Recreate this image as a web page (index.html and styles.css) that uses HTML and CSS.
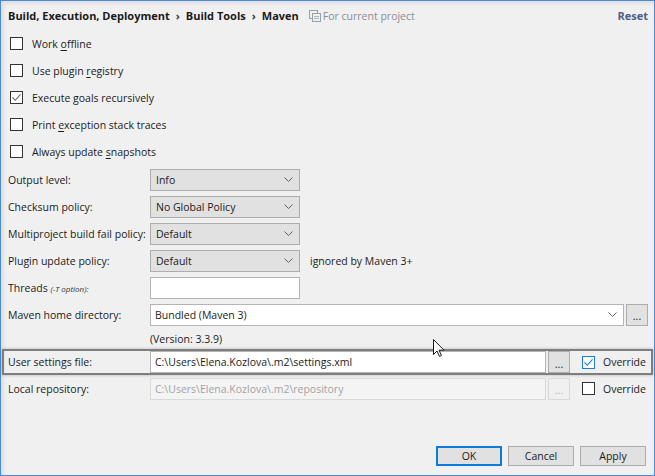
FILE: index.html
```html
<!DOCTYPE html>
<html>
<head>
<meta charset="utf-8">
<link rel="stylesheet" href="styles.css">
</head>
<body>
<div class="window">
  <header class="crumbs">
    <div class="path">
      <span class="b">Build, Execution, Deployment</span><span class="sep">›</span><span class="b">Build Tools</span><span class="sep">›</span><span class="b">Maven</span>
      <span class="scope"><svg class="scope-icon" width="12" height="12" viewBox="0 0 12 12"><rect x="0.5" y="0.5" width="8" height="8" fill="none" stroke="#9aa0a8"/><rect x="3.5" y="3.5" width="8" height="8" fill="#f0f0f0" stroke="#9aa0a8"/><path d="M5 6.5h5M5 8.5h5" stroke="#b0b5bb"/></svg>For current project</span>
    </div>
    <span class="reset">Reset</span>
  </header>

  <div class="checks">
    <div class="check"><span class="box"></span><span>Work <u>o</u>ffline</span></div>
    <div class="check"><span class="box"></span><span>Use plugin <u>r</u>egistry</span></div>
    <div class="check"><span class="box"><svg width="11" height="11" viewBox="0 0 11 11"><path d="M1.5 5.5l2.8 2.8 5.2-6" fill="none" stroke="#6a6a6a" stroke-width="1.1"/></svg></span><span>Execute <u>g</u>oals recursively</span></div>
    <div class="check"><span class="box"></span><span>Print <u>e</u>xception stack traces</span></div>
    <div class="check"><span class="box"></span><span>Always update <u>s</u>napshots</span></div>
  </div>

  <div class="form">
    <div class="row">
      <span class="label">Output level:</span>
      <div class="select"><span>Info</span><svg class="chev" width="9" height="5" viewBox="0 0 9 5"><path d="M0.5 0.5l4 4 4-4" fill="none" stroke="#606060"/></svg></div>
    </div>
    <div class="row">
      <span class="label">Checksum policy:</span>
      <div class="select"><span>No Global Policy</span><svg class="chev" width="9" height="5" viewBox="0 0 9 5"><path d="M0.5 0.5l4 4 4-4" fill="none" stroke="#606060"/></svg></div>
    </div>
    <div class="row">
      <span class="label">Multiproject build fail policy:</span>
      <div class="select"><span>Default</span><svg class="chev" width="9" height="5" viewBox="0 0 9 5"><path d="M0.5 0.5l4 4 4-4" fill="none" stroke="#606060"/></svg></div>
    </div>
    <div class="row">
      <span class="label">Plugin update policy:</span>
      <div class="select"><span>Default</span><svg class="chev" width="9" height="5" viewBox="0 0 9 5"><path d="M0.5 0.5l4 4 4-4" fill="none" stroke="#606060"/></svg></div>
      <span class="note">ignored by Maven 3+</span>
    </div>
    <div class="row">
      <span class="label">Threads <i class="hint">(-T option):</i></span>
      <div class="input threads"></div>
    </div>
    <div class="row">
      <span class="label">Maven home directory:</span>
      <div class="input combo"><span>Bundled (Maven 3)</span><svg class="chev" width="9" height="5" viewBox="0 0 9 5"><path d="M0.5 0.5l4 4 4-4" fill="none" stroke="#606060"/></svg></div>
      <div class="dots">...</div>
    </div>
    <div class="row version">
      <span class="label"></span>
      <span>(Version: 3.3.9)</span>
    </div>
    <div class="row path-row highlight">
      <span class="label">User settings file:</span>
      <div class="input path">C:\Users\Elena.Kozlova\.m2\settings.xml</div>
      <div class="dots">...</div>
      <div class="override"><span class="box blue"><svg width="11" height="11" viewBox="0 0 11 11"><path d="M1.5 5.5l2.8 2.8 5.2-6" fill="none" stroke="#1a7fd8" stroke-width="1.1"/></svg></span><span>Override</span></div>
    </div>
    <div class="row path-row local">
      <span class="label">Local repository:</span>
      <div class="input path disabled">C:\Users\Elena.Kozlova\.m2\repository</div>
      <div class="dots disabled">...</div>
      <div class="override"><span class="box"></span><span>Override</span></div>
    </div>
  </div>

  <footer class="buttons">
    <div class="btn default">OK</div>
    <div class="btn">Cancel</div>
    <div class="btn">Apply</div>
  </footer>

  <svg class="cursor" width="14" height="20" viewBox="0 0 14 20"><path d="M1.5 1.5v15l3.5-3.5 2.5 5.5 2-1-2.5-5.3h5z" fill="#fff" stroke="#1a1a1a" stroke-linejoin="round"/></svg>
</div>
</body>
</html>
```

FILE: styles.css
```css
html, body {
  margin: 0;
  padding: 0;
  background: #f0f0f0;
}

.window {
  position: relative;
  width: 655px;
  height: 476px;
  box-sizing: border-box;
  border: 1px solid #4a8ad8;
  background: #f0f0f0;
  box-shadow: inset 4px 4px 5px -2px rgba(0, 0, 0, 0.09);
  display: flex;
  flex-direction: column;
  font-family: "Open Sans", "Noto Sans", sans-serif;
  font-size: 10.5px;
  color: #1b1b1b;
  white-space: nowrap;
}

.crumbs {
  height: 29px;
  display: flex;
  align-items: center;
  justify-content: space-between;
  padding: 0 6px 0 7px;
}

.path {
  display: flex;
  align-items: center;
}

.b {
  font-size: 11px;
  font-weight: 700;
  color: #1b1b1b;
}

.sep {
  margin: 0 6px;
  font-size: 11px;
  font-weight: 700;
  color: #3a3a3a;
}

.scope {
  display: flex;
  align-items: center;
  margin-left: 10px;
  color: #8a8d93;
}

.scope-icon {
  margin-right: 2px;
}

.reset {
  font-size: 11px;
  font-weight: 700;
  color: #4f5d88;
}

.checks {
  display: flex;
  flex-direction: column;
}

.check {
  height: 27px;
  display: flex;
  align-items: center;
  padding-left: 9px;
}

.box {
  width: 13px;
  height: 13px;
  box-sizing: border-box;
  border: 1px solid #333;
  background: #fff;
  display: flex;
  align-items: center;
  justify-content: center;
  margin-right: 9px;
  flex: none;
}

.box.blue {
  border-color: #1a7fd8;
}

u {
  text-decoration: underline;
  text-underline-offset: 2px;
}

.form {
  display: flex;
  flex-direction: column;
  padding-top: 1px;
}

.row {
  height: 27px;
  display: flex;
  align-items: center;
  padding: 0 6px 0 7px;
}

.label {
  width: 142px;
  flex: none;
}

.hint {
  font-size: 8px;
  color: #333;
}

.select {
  width: 150px;
  height: 22px;
  box-sizing: border-box;
  border: 1px solid #adadad;
  background: #e1e1e1;
  display: flex;
  align-items: center;
  justify-content: space-between;
  padding: 0 6px 0 5px;
}

.chev {
  display: block;
}

.note {
  margin-left: 10px;
}

.input {
  height: 22px;
  box-sizing: border-box;
  border: 1px solid #b4b4b4;
  background: #fff;
  display: flex;
  align-items: center;
  padding: 0 4px;
}

.threads {
  width: 150px;
}

.combo {
  width: 474px;
  justify-content: space-between;
  padding-right: 6px;
}

.dots {
  width: 22px;
  height: 22px;
  box-sizing: border-box;
  border: 1px solid #adadad;
  background: #e1e1e1;
  margin-left: 2px;
  display: flex;
  align-items: flex-end;
  justify-content: center;
  padding-bottom: 3px;
  line-height: 1;
  flex: none;
}

.version {
  height: 21px;
}

.path-row {
  height: 26px;
}

.path-row.local {
  height: 27px;
}

.highlight {
  margin: 0 1px 0 1px;
  padding-left: 6px;
  box-shadow: inset 0 0 0 2px #7e7e7e, 0 0 3px rgba(0, 0, 0, 0.25);
}

.input.path {
  width: 396px;
}

.input.disabled {
  background: #f4f4f4;
  border-color: #d9d9d9;
  color: #a3a3a3;
}

.dots.disabled {
  background: #f0f0f0;
  border-color: #d9d9d9;
  color: #b5b5b5;
}

.override {
  display: flex;
  align-items: center;
  margin-left: 12px;
}

.override .box {
  margin-right: 8px;
}

.buttons {
  margin-top: auto;
  display: flex;
  justify-content: flex-end;
  gap: 6px;
  padding: 0 8px 9px 0;
}

.btn {
  width: 66px;
  height: 20px;
  box-sizing: border-box;
  border: 1px solid #adadad;
  background: #e1e1e1;
  display: flex;
  align-items: center;
  justify-content: center;
}

.btn.default {
  border: 2px solid #0b7ad8;
}

.cursor {
  position: absolute;
  left: 431px;
  top: 337px;
}
```
